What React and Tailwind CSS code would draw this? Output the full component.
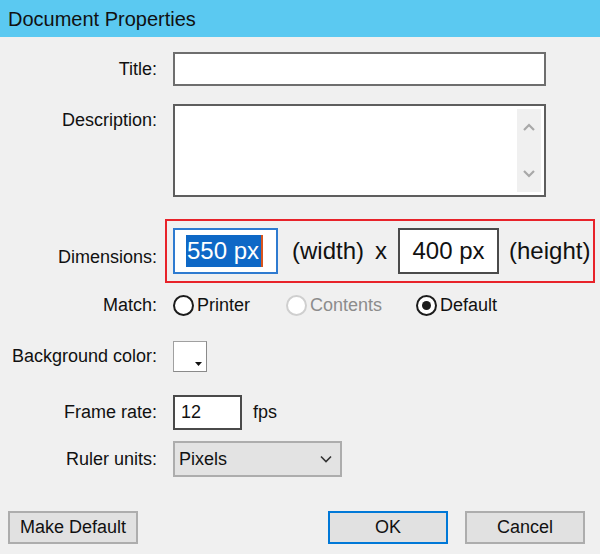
import React from "react";

function Radio({ checked, disabled, label }) {
  return (
    <div className="flex items-center">
      <span
        className={
          "w-[21px] h-[21px] rounded-full border-2 bg-white flex items-center justify-center " +
          (disabled ? "border-[#cfcfcf]" : "border-[#1c1c1c]")
        }
      >
        {checked && <span className="w-[9px] h-[9px] rounded-full bg-[#1c1c1c]"></span>}
      </span>
      <span className={"ml-[3px] " + (disabled ? "text-[#8c8c8c]" : "")}>{label}</span>
    </div>
  );
}

function Chevron({ up }) {
  return (
    <svg width="12" height="8" viewBox="0 0 12 8" fill="none">
      <path
        d={up ? "M1 7 L6 2 L11 7" : "M1 1 L6 6 L11 1"}
        stroke="#a8a8a8"
        strokeWidth="2.2"
      />
    </svg>
  );
}

export default function App() {
  return (
    <div className="w-[600px] h-[554px] bg-[#f0f0f0] text-[18px] text-[#111] font-['Liberation_Sans',Arial,sans-serif] overflow-hidden">
      <div className="h-[37px] bg-[#5bc9f1] pl-[8px] flex items-center text-[20px] text-[#111]">
        Document Properties
      </div>

      {/* Title */}
      <div className="flex items-center mt-[15px]">
        <div className="w-[157px] text-right">Title:</div>
        <div className="ml-4 w-[373px] h-[34px] border-2 border-[#6e6e6e] bg-white"></div>
      </div>

      {/* Description */}
      <div className="flex mt-[18px]">
        <div className="w-[157px] text-right pt-[3px]">Description:</div>
        <div className="ml-4 w-[373px] h-[93px] border-2 border-[#5e5e5e] bg-white flex justify-end p-[3px]">
          <div className="w-[24px] h-full bg-[#f0f0f0] flex flex-col items-center justify-between py-[14px]">
            <Chevron up />
            <Chevron />
          </div>
        </div>
      </div>

      {/* Dimensions */}
      <div className="flex items-center mt-[22px]">
        <div className="w-[157px] text-right mt-[12px]">Dimensions:</div>
        <div className="ml-2 w-[430px] h-[64px] border-2 border-[#e8232a] flex items-center pl-[6px] text-[24px]">
          <div className="w-[105px] h-[46px] border-2 border-[#2f7bd0] bg-white flex items-center pl-[11px]">
            <span className="bg-[#0e68c6] text-white h-[32px] flex items-center pl-[1px] pr-[2px] leading-none">
              550 px
            </span>
            <span className="w-[2px] h-[32px] bg-[#d8551e]"></span>
          </div>
          <span className="ml-[14px]">(width)</span>
          <span className="ml-[11px]">x</span>
          <div className="ml-[11px] w-[101px] h-[46px] border-2 border-[#4a4a4a] bg-white flex items-center justify-center">
            400 px
          </div>
          <span className="ml-[10px]">(height)</span>
        </div>
      </div>

      {/* Match */}
      <div className="flex items-center mt-[12px] h-[21px]">
        <div className="w-[157px] text-right">Match:</div>
        <div className="ml-4 flex items-center">
          <div className="w-[113px]">
            <Radio label="Printer" />
          </div>
          <div className="w-[130px]">
            <Radio label="Contents" disabled />
          </div>
          <Radio label="Default" checked />
        </div>
      </div>

      {/* Background color */}
      <div className="flex items-center mt-[25px]">
        <div className="w-[157px] text-right">Background color:</div>
        <div className="ml-4 w-[34px] h-[31px] border border-[#a0a0a0] border-r-[#8a8a8a] border-b-[#8a8a8a] bg-white flex items-end justify-end pr-[4px] pb-[5px]">
          <svg width="7" height="4" viewBox="0 0 7 4">
            <path d="M0 0 H7 L3.5 4 Z" fill="#111" />
          </svg>
        </div>
      </div>

      {/* Frame rate */}
      <div className="flex items-center mt-[23px]">
        <div className="w-[157px] text-right">Frame rate:</div>
        <div className="ml-4 w-[69px] h-[35px] border-2 border-[#4a4a4a] bg-white flex items-center pl-[6px]">
          12
        </div>
        <span className="ml-[11px]">fps</span>
      </div>

      {/* Ruler units */}
      <div className="flex items-center mt-[11px]">
        <div className="w-[157px] text-right">Ruler units:</div>
        <div className="ml-4 w-[169px] h-[36px] border-2 border-[#adadad] bg-[#e3e3e3] flex items-center justify-between pl-[4px] pr-[8px]">
          <span>Pixels</span>
          <svg width="12" height="8" viewBox="0 0 12 8" fill="none">
            <path d="M1 1.5 L6 6.5 L11 1.5" stroke="#333" strokeWidth="1.6" />
          </svg>
        </div>
      </div>

      {/* Buttons */}
      <div className="flex items-center mt-[34px] px-[8px] pr-[15px]">
        <button className="w-[130px] h-[33px] border-2 border-[#adadad] bg-[#e1e1e1]">
          Make Default
        </button>
        <button className="ml-auto w-[120px] h-[33px] border-2 border-[#0078d7] bg-[#e1e1e1]">
          OK
        </button>
        <button className="ml-[17px] w-[120px] h-[33px] border-2 border-[#adadad] bg-[#e1e1e1]">
          Cancel
        </button>
      </div>
    </div>
  );
}
